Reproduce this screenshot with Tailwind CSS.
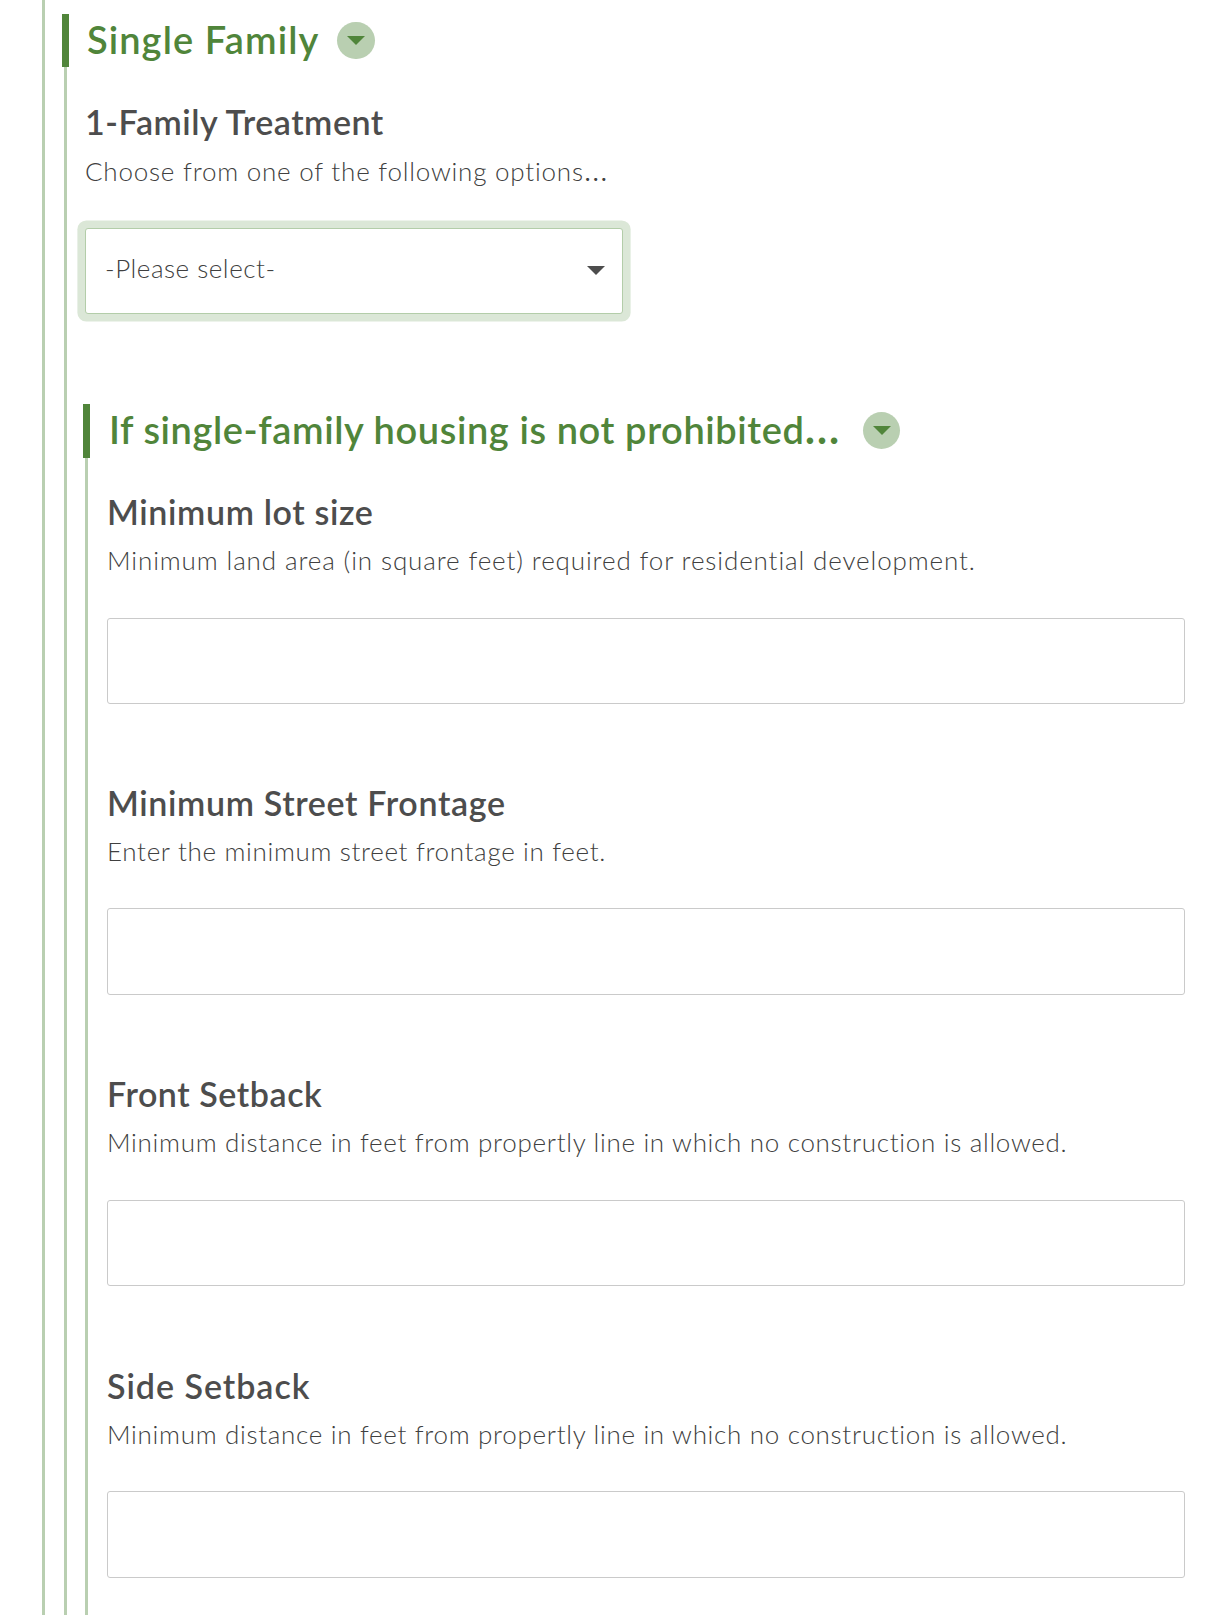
<!DOCTYPE html>
<html lang="en">
<head>
<meta charset="utf-8">
<title>Zoning form</title>
<script src="https://cdn.jsdelivr.net/npm/@tailwindcss/browser@4"></script>
</head>
<body class="h-[1615px] overflow-hidden bg-white pl-[42px] font-['Lato',sans-serif] text-[#4d4d4d]">
<main class="h-[1615px] border-l-[3px] border-[#b9cfb1] pt-[14px] pl-[17px]">
  <section class="flex h-[1601px] flex-col">
    <header class="flex h-[53px] shrink-0 items-center border-l-[7px] border-[#50853a] pl-[18px]">
      <h2 class="w-[250px] pb-[3px] text-[38px] leading-[53px] font-semibold tracking-[1.1px] whitespace-nowrap text-[#50853a]">Single Family</h2>
      <button class="flex h-[37px] w-[38px] items-center justify-center rounded-full bg-[#b9cfb1]" aria-label="Toggle">
        <svg class="h-[9px] w-[18px]" viewBox="0 0 18 9" fill="#50853a"><path d="M0 0h18L9 9z"/></svg>
      </button>
    </header>
    <div class="ml-[2px] flex-1 border-l-[3px] border-[#b9cfb1] pt-[31px] pl-[16px]">
      <div class="h-[306px] pl-[2px]">
        <h3 class="text-[34px] leading-[48px] font-semibold tracking-[0.54px] whitespace-nowrap">1-Family Treatment</h3>
        <p class="mt-[6px] h-[36px] text-[26px] leading-[36px] font-light tracking-[0.78px] whitespace-nowrap text-[#404040]">Choose from one of the following options<span class="text-[33px] leading-none">…</span></p>
        <div class="mt-[40px] flex h-[86px] w-[538px] items-center justify-between rounded-[3px] border border-[#b3cda9] bg-white pr-[17px] pl-[19px] ring-[7.6px] ring-[#dbe7d7]">
          <span class="pb-[6px] text-[26px] leading-[36px] font-light tracking-[0.52px] whitespace-nowrap text-[#404040]">-Please select-</span>
          <svg class="mb-px h-[9px] w-[18px]" viewBox="0 0 18 9" fill="#4d4d4d"><path d="M0 0h18L9 9z"/></svg>
        </div>
      </div>
      <section class="flex h-[1211px] flex-col">
        <header class="flex h-[54px] shrink-0 items-center border-l-[7px] border-[#50853a] pl-[19px]">
          <h2 class="h-[57px] w-[754px] pb-[4px] text-[38px] leading-[53px] font-semibold tracking-[0.6px] whitespace-nowrap text-[#50853a]">If single-family housing is not prohibited<span class="text-[46px] leading-none">…</span></h2>
          <button class="mb-px flex h-[37px] w-[37px] items-center justify-center rounded-full bg-[#b9cfb1]" aria-label="Toggle">
            <svg class="h-[9px] w-[18px]" viewBox="0 0 18 9" fill="#50853a"><path d="M0 0h18L9 9z"/></svg>
          </button>
        </header>
        <div class="ml-[2px] flex-1 border-l-[3px] border-[#b9cfb1] pt-[30px] pl-[19px]">
          <div class="h-[291px]">
            <h3 class="text-[34px] leading-[48px] font-semibold tracking-[0.64px] whitespace-nowrap">Minimum lot size</h3>
            <p class="mt-[6px] text-[26px] leading-[36px] font-light tracking-[0.88px] whitespace-nowrap text-[#404040]">Minimum land area (in square feet) required for residential development.</p>
            <input class="mt-[40px] block h-[86px] w-[1078px] rounded-[3px] border border-[#cacaca]" aria-label="Minimum lot size">
          </div>
          <div class="h-[291px]">
            <h3 class="text-[34px] leading-[48px] font-semibold tracking-[0.65px] whitespace-nowrap">Minimum Street Frontage</h3>
            <p class="mt-[6px] text-[26px] leading-[36px] font-light tracking-[0.67px] whitespace-nowrap text-[#404040]">Enter the minimum street frontage in feet.</p>
            <input class="mt-[39px] block h-[87px] w-[1078px] rounded-[3px] border border-[#cacaca]" aria-label="Minimum Street Frontage">
          </div>
          <div class="h-[292px]">
            <h3 class="text-[34px] leading-[48px] font-semibold tracking-[0.56px] whitespace-nowrap">Front Setback</h3>
            <p class="mt-[6px] text-[26px] leading-[36px] font-light tracking-[0.69px] whitespace-nowrap text-[#404040]">Minimum distance in feet from propertly line in which no construction is allowed.</p>
            <input class="mt-[40px] block h-[86px] w-[1078px] rounded-[3px] border border-[#cacaca]" aria-label="Front Setback">
          </div>
          <div class="h-[291px]">
            <h3 class="text-[34px] leading-[48px] font-semibold tracking-[0.98px] whitespace-nowrap">Side Setback</h3>
            <p class="mt-[6px] text-[26px] leading-[36px] font-light tracking-[0.69px] whitespace-nowrap text-[#404040]">Minimum distance in feet from propertly line in which no construction is allowed.</p>
            <input class="mt-[39px] block h-[87px] w-[1078px] rounded-[3px] border border-[#cacaca]" aria-label="Side Setback">
          </div>
        </div>
      </section>
    </div>
  </section>
</main>
</body>
</html>
